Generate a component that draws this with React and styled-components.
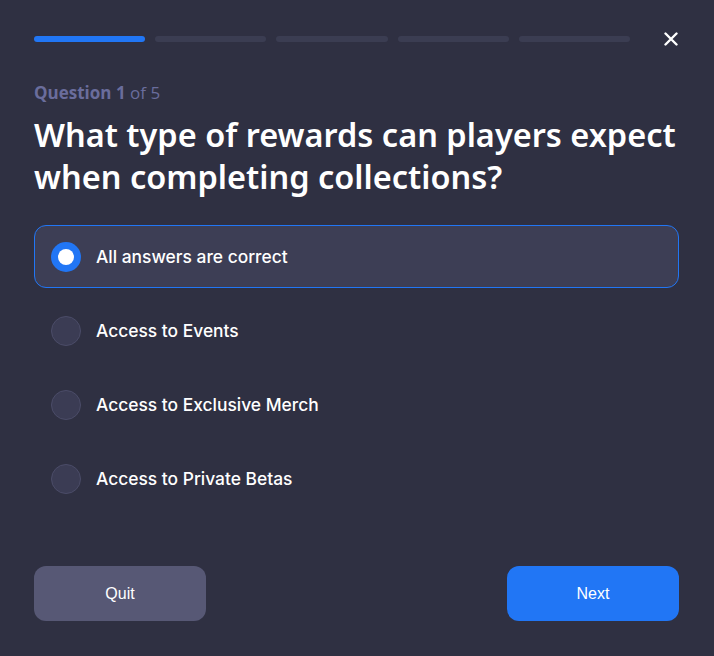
import styled, { createGlobalStyle } from "styled-components";
import { useState } from "react";

const Global = createGlobalStyle`
  html, body {
    margin: 0;
    padding: 0;
    background: #2f3042;
  }
  * { box-sizing: border-box; }
`;

const Page = styled.div`
  width: 714px;
  height: 656px;
  padding: 36px 35px 0 34px;
  display: flex;
  flex-direction: column;
  background: #2f3042;
`;

const TopBar = styled.div`
  display: flex;
  align-items: center;
  height: 6px;
`;

const Steps = styled.div`
  display: flex;
  gap: 10px;
  width: 596px;
`;

const Step = styled.div`
  flex: 1;
  height: 6px;
  border-radius: 3px;
  background: ${(p) => (p.$active ? "#2176f5" : "#3b3d52")};
`;

const Close = styled.button`
  margin-left: auto;
  margin-right: 1px;
  width: 14px;
  height: 14px;
  padding: 0;
  border: none;
  background: none;
  display: flex;
  cursor: pointer;
`;

const Counter = styled.div`
  margin-top: 42px;
  font-family: "Open Sans", "Noto Sans", sans-serif;
  font-size: 17px;
  letter-spacing: 0;
  color: #6a6d9c;
  line-height: 18px;
  b { font-weight: 700; }
`;

const Heading = styled.h1`
  margin: 12px 0 0;
  font-family: "Noto Sans", "Open Sans", sans-serif;
  font-weight: 600;
  font-size: 32.5px;
  line-height: 42px;
  color: #ffffff;
`;

const Options = styled.div`
  margin-top: 27px;
  display: flex;
  flex-direction: column;
  gap: 11px;
`;

const Option = styled.div`
  height: 63px;
  display: flex;
  align-items: center;
  padding-left: 16px;
  gap: 15px;
  border-radius: 12px;
  border: 1px solid ${(p) => (p.$selected ? "#2176f5" : "transparent")};
  background: ${(p) => (p.$selected ? "#3d3e55" : "transparent")};
  cursor: pointer;
`;

const Radio = styled.span`
  width: 30px;
  height: 30px;
  border-radius: 50%;
  flex-shrink: 0;
  display: flex;
  align-items: center;
  justify-content: center;
  background: ${(p) => (p.$on ? "#2176f5" : "#3b3c54")};
  border: ${(p) => (p.$on ? "none" : "1px solid #4b4c68")};
  &::after {
    content: "";
    display: ${(p) => (p.$on ? "block" : "none")};
    width: 16px;
    height: 16px;
    border-radius: 50%;
    background: #ffffff;
  }
`;

const Label = styled.span`
  font-family: "Inter", "Lato", sans-serif;
  font-weight: 500;
  font-size: 17.4px;
  color: #ffffff;
`;

const Footer = styled.div`
  margin-top: auto;
  margin-bottom: 35px;
  display: flex;
  justify-content: space-between;
`;

const Button = styled.button`
  width: 172px;
  height: 55px;
  border: none;
  border-radius: 12px;
  font-family: "Liberation Sans", Arial, sans-serif;
  font-size: 16px;
  color: #ffffff;
  background: ${(p) => (p.$primary ? "#2176f5" : "#575875")};
  cursor: pointer;
`;

const answers = [
  "All answers are correct",
  "Access to Events",
  "Access to Exclusive Merch",
  "Access to Private Betas",
];

export default function App() {
  const [picked, setPicked] = useState(0);

  return (
    <>
      <Global />
      <Page>
        <TopBar>
          <Steps>
            {[0, 1, 2, 3, 4].map((i) => (
              <Step key={i} $active={i === 0} />
            ))}
          </Steps>
          <Close aria-label="Close">
            <svg width="14" height="14" viewBox="0 0 14 14">
              <path
                d="M1.5 1.5 L12.5 12.5 M12.5 1.5 L1.5 12.5"
                stroke="#ffffff"
                strokeWidth="2.4"
                strokeLinecap="round"
              />
            </svg>
          </Close>
        </TopBar>
        <Counter>
          <b>Question 1</b> of 5
        </Counter>
        <Heading>
          What type of rewards can players expect when completing collections?
        </Heading>
        <Options>
          {answers.map((a, i) => (
            <Option key={a} $selected={picked === i} onClick={() => setPicked(i)}>
              <Radio $on={picked === i} />
              <Label>{a}</Label>
            </Option>
          ))}
        </Options>
        <Footer>
          <Button>Quit</Button>
          <Button $primary>Next</Button>
        </Footer>
      </Page>
    </>
  );
}
